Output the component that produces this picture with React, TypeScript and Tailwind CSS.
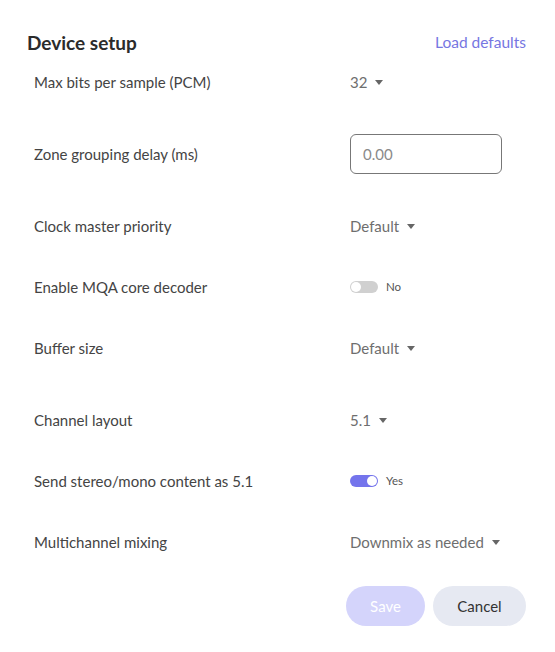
import React from "react";

type Row =
  | { kind: "select"; label: string; value: string; mt: string }
  | { kind: "input"; label: string; placeholder: string; mt: string }
  | { kind: "toggle"; label: string; on: boolean; mt: string };

const rows: Row[] = [
  { kind: "select", label: "Max bits per sample (PCM)", value: "32", mt: "mt-[4px]" },
  { kind: "input", label: "Zone grouping delay (ms)", placeholder: "0.00", mt: "mt-[32px]" },
  { kind: "select", label: "Clock master priority", value: "Default", mt: "mt-[32px]" },
  { kind: "toggle", label: "Enable MQA core decoder", on: false, mt: "mt-[21px]" },
  { kind: "select", label: "Buffer size", value: "Default", mt: "mt-[21px]" },
  { kind: "select", label: "Channel layout", value: "5.1", mt: "mt-[32px]" },
  { kind: "toggle", label: "Send stereo/mono content as 5.1", on: true, mt: "mt-[21px]" },
  { kind: "select", label: "Multichannel mixing", value: "Downmix as needed", mt: "mt-[21px]" },
];

const Caret = () => (
  <svg width="8" height="5" viewBox="0 0 8 5" className="ml-[8px] mt-[1px]">
    <path d="M0 0 L8 0 L4 5 Z" fill="#666" />
  </svg>
);

const Toggle = ({ on }: { on: boolean }) => (
  <div className="flex items-center">
    <div
      className={`relative w-[28px] h-[12px] rounded-full ${on ? "bg-[#7474ec]" : "bg-[#d0d0d0]"}`}
    >
      <div
        className={`absolute top-[1px] w-[10px] h-[10px] rounded-full bg-white ${on ? "left-[17px]" : "left-[1px]"}`}
      />
    </div>
    <span className="ml-[8px] text-[11.5px] text-[#555]">{on ? "Yes" : "No"}</span>
  </div>
);

export default function App() {
  return (
    <div
      className="w-[555px] h-[652px] bg-white px-[27px] pt-[28px]"
      style={{ fontFamily: "Lato, 'Open Sans', sans-serif" }}
    >
      <div className="flex items-center justify-between h-[30px] pr-[2px]">
        <h2 className="text-[19px] font-bold text-[#2b2b2b]">Device setup</h2>
        <button className="text-[15.5px] text-[#7676e2]">Load defaults</button>
      </div>

      <div className="flex flex-col">
        {rows.map((r) => (
          <div key={r.label} className={`flex items-center h-[40px] ${r.mt}`}>
            <div className="w-[323px] pl-[7px] text-[15px] text-[#444]">{r.label}</div>
            {r.kind === "select" && (
              <div className="flex items-center text-[15px] text-[#6e6e6e]">
                {r.value}
                <Caret />
              </div>
            )}
            {r.kind === "input" && (
              <div className="w-[152px] h-[40px] rounded-[6px] border border-[#777] flex items-center px-[12px] text-[15px] text-[#8a8a8a]">
                {r.placeholder}
              </div>
            )}
            {r.kind === "toggle" && <Toggle on={r.on} />}
          </div>
        ))}
      </div>

      <div className="flex justify-end gap-[8px] mt-[24px] pr-[2px]">
        <button className="w-[79px] h-[40px] rounded-full bg-[#d4d4fb] text-white text-[15px]">
          Save
        </button>
        <button className="w-[93px] h-[40px] rounded-full bg-[#e6e9f2] text-[#333] text-[15px]">
          Cancel
        </button>
      </div>
    </div>
  );
}
